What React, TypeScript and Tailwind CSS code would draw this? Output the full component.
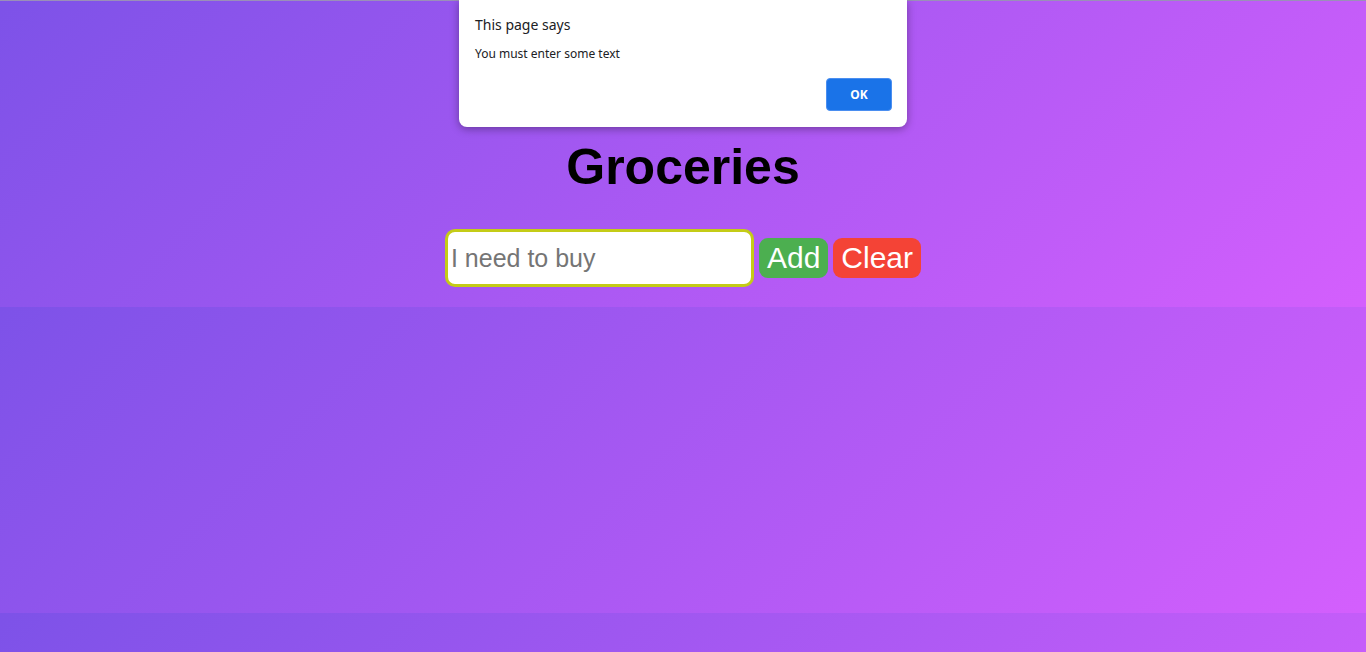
import React from "react";

export default function App() {
  return (
    <div className="relative w-full h-[652px] overflow-hidden bg-[linear-gradient(135deg,#7d52e8,#d45ffd)] bg-[length:100%_306px] bg-[position:0_1px] bg-repeat font-['Liberation_Sans',Arial,sans-serif]">
      <div className="h-px w-full bg-[#9a8fb8]" />
      <div className="flex flex-col items-center pt-[138px]">
        <h1 className="text-[50px] leading-[56px] font-bold text-black">Groceries</h1>
        <div className="mt-[34px] flex items-center gap-[5px]">
          <input
            placeholder="I need to buy"
            className="w-[309px] h-[58px] rounded-[10px] border-[3px] border-[#c4cc17] bg-white px-[3px] text-[25px] text-black placeholder:text-[#757575] outline-none"
          />
          <button className="h-[40px] rounded-[9px] bg-[#4caf50] px-2 text-[30px] leading-[40px] text-white">Add</button>
          <button className="h-[40px] rounded-[9px] bg-[#f44336] px-2 text-[30px] leading-[40px] text-white">Clear</button>
        </div>
      </div>

      <div className="absolute left-[459px] top-0 w-[448px] h-[127px] rounded-b-[8px] bg-white shadow-[0_2px_8px_rgba(0,0,0,0.35)] font-['Noto_Sans','Open_Sans',sans-serif]">
        <div className="absolute left-[16px] top-[15px] text-[14px] leading-[20px] text-[#202124]">This page says</div>
        <div className="absolute left-[16px] top-[46px] text-[12px] leading-[16px] text-[#202124]">You must enter some text</div>
        <button className="absolute left-[367px] top-[78px] w-[66px] h-[33px] rounded-[4px] border border-[#4a8ef0] bg-[#1a73e8] text-[12px] font-bold text-white">OK</button>
      </div>
    </div>
  );
}
